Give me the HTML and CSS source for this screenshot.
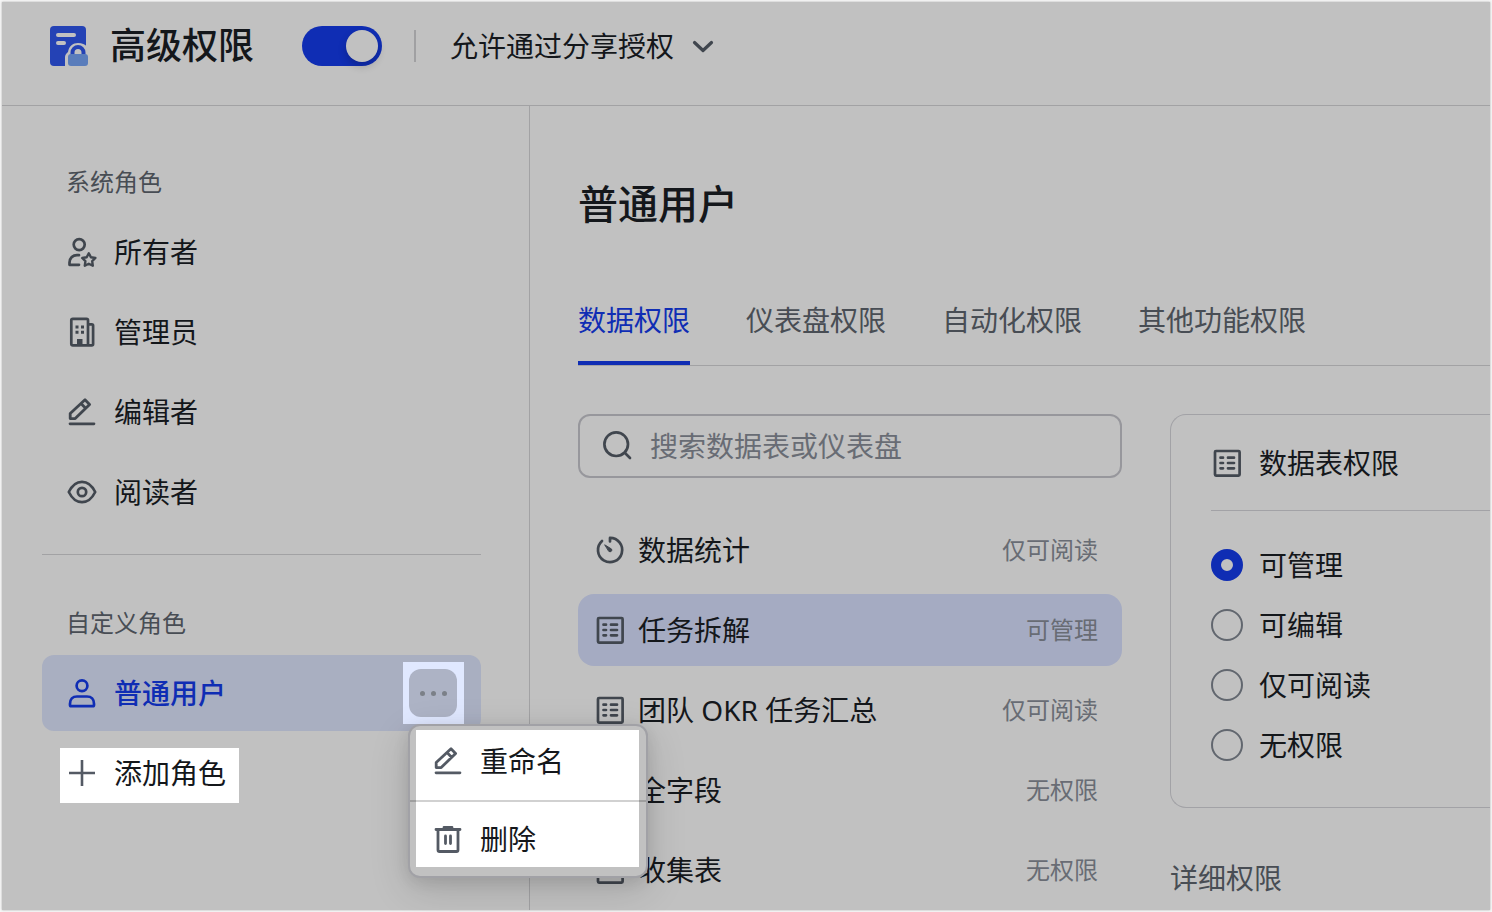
FILE: index.html
```html
<!DOCTYPE html>
<html lang="zh-CN">
<head>
    <meta charset="UTF-8">
    <meta name="viewport" content="width=device-width, initial-scale=1.0">
    <title>高级权限</title>
    <link rel="stylesheet" href="styles.css">
</head>
<body>

<!-- 公用图标 -->
<svg class="icon-defs" aria-hidden="true">
    <symbol id="icon-table" viewBox="0 0 32 32">
        <rect x="4" y="4" width="24.600" height="24.600" rx="1" fill="none" stroke="currentColor" stroke-width="2.700"/>
        <path d="M9.500 10.700h2.500M9.500 16h2.500M9.500 21.300h2.500M17 10.700h6M17 16h6M17 21.300h6" fill="none" stroke="currentColor" stroke-width="2.700" stroke-linecap="round"/>
    </symbol>
    <symbol id="icon-edit" viewBox="0 0 32 32">
        <path d="M4 27.800h24" fill="none" stroke="currentColor" stroke-width="2.700" stroke-linecap="round"/>
        <path d="M4.200 22.600v-5L19 3.800l4.600 4.600L9.200 22.600zM15 7.600l4.600 4.600" fill="none" stroke="currentColor" stroke-width="2.800" stroke-linejoin="round"/>
    </symbol>
</svg>

<div class="app">
    <!-- 顶部栏 -->
    <header class="header">
        <svg class="logo" viewBox="0 0 40 40" aria-hidden="true">
            <rect x="0" y="0" width="36" height="40" rx="4" fill="#2442b5"/>
            <path d="M8 9h16M8 17h6" fill="none" stroke="#c1c1c1" stroke-width="4" stroke-linecap="round"/>
            <path d="M15 40V31c0-2 1-3 3-5C19 20 23 17 28 17c4 0 7 1 9 4V29H40V40z" fill="#c1c1c1"/>
            <path d="M22.500 29v-2.500a5.500 5.500 0 0 1 11 0V29" fill="none" stroke="#2442b5" stroke-width="4"/>
            <rect x="18" y="28" width="20" height="12" rx="3" fill="#5a7dbb"/>
        </svg>
        <h1 class="header-title">高级权限</h1>
        <input type="checkbox" class="switch" role="switch" aria-label="高级权限" checked>
        <span class="header-line"></span>
        <div class="share">
            <select class="share-select" aria-label="分享授权">
                <option>允许通过分享授权</option>
            </select>
            <svg class="share-arrow" viewBox="0 0 24 24" aria-hidden="true">
                <path d="M3.500 8.500l8.500 8 8.500-8" fill="none" stroke="currentColor" stroke-width="3.200" stroke-linecap="round" stroke-linejoin="round"/>
            </svg>
        </div>
    </header>

    <div class="body">
        <!-- 左侧角色列表 -->
        <aside class="sidebar">
            <h2 class="group-title">系统角色</h2>
            <ul class="role-list">
                <li class="role">
                    <button class="role-button">
                        <svg class="icon" viewBox="0 0 32 32" fill="none" stroke="currentColor" stroke-width="2.700" stroke-linejoin="round" aria-hidden="true">
                            <circle cx="13.200" cy="8.600" r="5.500"/>
                            <path d="M13 19.200h-2c-4.500 0-7.500 3-7.500 7.300v2.300H13" stroke-linecap="round"/>
                            <path d="M22.800 17.200l2.100 4 4.500.8-3.200 3.200.6 4.500-4-2-4 2 .6-4.500-3.200-3.200 4.500-.8z" stroke-width="2.400"/>
                        </svg>
                        <span>所有者</span>
                    </button>
                </li>
                <li class="role">
                    <button class="role-button">
                        <svg class="icon" viewBox="0 0 32 32" aria-hidden="true">
                            <path d="M22 29.400H6.800A1.500 1.500 0 0 1 5.300 28V4.300a1.500 1.500 0 0 1 1.500-1.500H20.500A1.500 1.500 0 0 1 22 4.300v25.100h3.800a1.300 1.300 0 0 0 1.300-1.300V9.600a1.300 1.300 0 0 0-1.300-1.300H22" fill="none" stroke="currentColor" stroke-width="2.700"/>
                            <path d="M9.500 9.500h3v3h-3zM15 9.500h3v3h-3zM9.500 14.800h3v3h-3zM15 14.800h3v3h-3zM11 23h5.500v6H11z" fill="currentColor"/>
                        </svg>
                        <span>管理员</span>
                    </button>
                </li>
                <li class="role">
                    <button class="role-button">
                        <svg class="icon" aria-hidden="true"><use href="#icon-edit"/></svg>
                        <span>编辑者</span>
                    </button>
                </li>
                <li class="role">
                    <button class="role-button">
                        <svg class="icon" viewBox="0 0 32 32" fill="none" stroke="currentColor" stroke-width="2.700" stroke-linejoin="round" aria-hidden="true">
                            <path d="M2.800 16C6 9.500 10.500 5.800 16 5.800S26 9.500 29.200 16C26 22.500 21.500 26.200 16 26.200S6 22.500 2.800 16z"/>
                            <circle cx="16" cy="16" r="4.200"/>
                        </svg>
                        <span>阅读者</span>
                    </button>
                </li>
            </ul>

            <hr class="divider">

            <h2 class="group-title">自定义角色</h2>
            <ul class="role-list">
                <li class="role active">
                    <button class="role-button">
                        <svg class="icon" viewBox="0 0 32 32" fill="none" stroke="currentColor" stroke-width="2.700" stroke-linejoin="round" aria-hidden="true">
                            <circle cx="16" cy="8.700" r="5.400"/>
                            <path d="M5.200 29.200A1.200 1.200 0 0 1 4 28v-1.200c0-4.500 2.600-7.300 7-7.300h10c4.400 0 7 2.800 7 7.300V28a1.200 1.200 0 0 1-1.200 1.200z"/>
                        </svg>
                        <span>普通用户</span>
                    </button>
                    <div class="more">
                        <button class="more-button" aria-label="更多操作">
                            <i class="dot"></i><i class="dot"></i><i class="dot"></i>
                        </button>
                        <!-- 更多操作菜单 -->
                        <div class="menu">
                            <ul class="menu-list">
                                <li>
                                    <button class="menu-item">
                                        <svg class="icon" aria-hidden="true"><use href="#icon-edit"/></svg>
                                        <span>重命名</span>
                                    </button>
                                </li>
                                <li class="menu-line"></li>
                                <li>
                                    <button class="menu-item last">
                                        <svg class="icon" viewBox="0 0 32 32" fill="none" stroke="currentColor" stroke-width="2.800" stroke-linejoin="round" aria-hidden="true">
                                            <path d="M6 6.500V27a1.500 1.500 0 0 0 1.500 1.500h17A1.500 1.500 0 0 0 26 27V6.500"/>
                                            <path d="M4 6.500h24M12 4.500h8M13.500 13v7.500M18.500 13v7.500" stroke-linecap="round"/>
                                        </svg>
                                        <span>删除</span>
                                    </button>
                                </li>
                            </ul>
                        </div>
                    </div>
                </li>
                <li class="role">
                    <button class="add-button">
                        <svg class="icon" viewBox="0 0 32 32" aria-hidden="true">
                            <path d="M16 3v26M3 16h26" fill="none" stroke="currentColor" stroke-width="2.600"/>
                        </svg>
                        <span>添加角色</span>
                    </button>
                </li>
            </ul>
        </aside>

        <!-- 右侧权限设置 -->
        <main class="main">
            <h2 class="main-title">普通用户</h2>
            <div class="tabs" role="tablist">
                <button class="tab active" role="tab" aria-selected="true">数据权限</button>
                <button class="tab" role="tab">仪表盘权限</button>
                <button class="tab" role="tab">自动化权限</button>
                <button class="tab" role="tab">其他功能权限</button>
            </div>

            <div class="content">
                <section class="tables">
                    <label class="search">
                        <svg class="icon" viewBox="0 0 32 32" fill="none" stroke="currentColor" stroke-width="2.700" stroke-linecap="round" aria-hidden="true">
                            <circle cx="14.200" cy="14.200" r="11.800"/>
                            <path d="M23 23l5 5"/>
                        </svg>
                        <input type="text" class="search-input" placeholder="搜索数据表或仪表盘" aria-label="搜索数据表或仪表盘">
                    </label>
                    <ul class="table-list">
                        <li>
                            <button class="table-item">
                                <svg class="icon" viewBox="0 0 32 32" fill="none" stroke="currentColor" stroke-width="2.700" stroke-linecap="round" stroke-linejoin="round" aria-hidden="true">
                                    <path d="M8 7A12.100 12.100 0 1 0 16 3.900V7.500"/>
                                    <path d="M11 11l6.500 4a1.800 1.800 0 0 1-2.500 2.500z" fill="currentColor" stroke-width="1"/>
                                </svg>
                                <span>数据统计</span>
                                <span class="state">仅可阅读</span>
                            </button>
                        </li>
                        <li>
                            <button class="table-item active">
                                <svg class="icon" aria-hidden="true"><use href="#icon-table"/></svg>
                                <span>任务拆解</span>
                                <span class="state">可管理</span>
                            </button>
                        </li>
                        <li>
                            <button class="table-item">
                                <svg class="icon" aria-hidden="true"><use href="#icon-table"/></svg>
                                <span>团队 OKR 任务汇总</span>
                                <span class="state">仅可阅读</span>
                            </button>
                        </li>
                        <li>
                            <button class="table-item">
                                <svg class="icon" aria-hidden="true"><use href="#icon-table"/></svg>
                                <span>全字段</span>
                                <span class="state">无权限</span>
                            </button>
                        </li>
                        <li>
                            <button class="table-item">
                                <svg class="icon" aria-hidden="true"><use href="#icon-table"/></svg>
                                <span>收集表</span>
                                <span class="state">无权限</span>
                            </button>
                        </li>
                    </ul>
                </section>

                <section class="detail">
                    <div class="panel">
                        <h3 class="panel-title">
                            <svg class="icon" aria-hidden="true"><use href="#icon-table"/></svg>
                            <span>数据表权限</span>
                        </h3>
                        <div class="options">
                            <label class="option"><input type="radio" name="permission" class="radio" checked>可管理</label>
                            <label class="option"><input type="radio" name="permission" class="radio">可编辑</label>
                            <label class="option"><input type="radio" name="permission" class="radio">仅可阅读</label>
                            <label class="option"><input type="radio" name="permission" class="radio">无权限</label>
                        </div>
                    </div>
                    <h3 class="detail-title">详细权限</h3>
                </section>
            </div>
        </main>
    </div>
</div>

</body>
</html>
```
FILE: styles.css
```css
* {
    box-sizing: border-box;
}

body {
    margin: 0;
    padding: 2px;
    background-color: #f6f6f6;
    color: #14171b;
    font-family: "Noto Sans", "Noto Sans CJK SC", sans-serif;
    font-size: 28px;
    line-height: 44px;
    overflow: hidden;
}

h1, h2, h3, ul {
    margin: 0;
    padding: 0;
    font-size: 28px;
    font-weight: 400;
    list-style: none;
}

button, input, select {
    margin: 0;
    padding: 0;
    border: none;
    background: none;
    color: inherit;
    font: inherit;
    cursor: pointer;
}

.icon-defs {
    position: absolute;
    width: 0;
    height: 0;
}

.icon {
    flex: none;
    width: 32px;
    height: 32px;
    color: #40464e;
}

.app {
    display: flex;
    flex-direction: column;
    min-height: calc(100vh - 4px);
    background-color: #c1c1c1;
    box-shadow: 0 0 2px rgba(0, 0, 0, 0.3);
}

/* 顶部栏 */
.header {
    display: flex;
    align-items: center;
    height: 104px;
    padding: 0 48px 15px;
    border-bottom: 1px solid #a2a2a4;
}

.logo {
    width: 40px;
    height: 40px;
}

.header-title {
    margin: 0 48px 0 20px;
    font-size: 36px;
    font-weight: 500;
}

.switch {
    appearance: none;
    width: 80px;
    height: 40px;
    padding: 4px;
    border-radius: 20px;
    background-color: #0f2db4;
}

.switch::before {
    content: "";
    display: block;
    width: 32px;
    height: 32px;
    margin-left: auto;
    border-radius: 50%;
    background-color: #c1c1c1;
    box-shadow: 0 4px 8px rgba(0, 0, 0, 0.2);
}

.header-line {
    width: 2px;
    height: 32px;
    margin: 0 34px 0 32px;
    background-color: #a0a0a2;
}

.share {
    position: relative;
}

.share-select {
    appearance: none;
    display: block;
    height: 44px;
    padding-right: 40px;
}

.share-arrow {
    position: absolute;
    top: 10px;
    right: 0;
    width: 24px;
    height: 24px;
    color: #40464e;
    pointer-events: none;
}

.body {
    display: flex;
    flex: 1;
}

/* 左侧角色列表 */
.sidebar {
    flex: none;
    width: 528px;
    padding: 58px 48px 0 40px;
    border-right: 1px solid #a2a2a4;
}

.group-title {
    margin-bottom: 14px;
    padding-left: 24px;
    color: #484d54;
    font-size: 24px;
    line-height: 36px;
}

.role-list {
    display: flex;
    flex-direction: column;
    gap: 4px;
}

.role {
    display: flex;
    align-items: center;
    height: 76px;
    border-radius: 12px;
}

.role-button {
    display: flex;
    flex: 1;
    align-items: center;
    gap: 16px;
    padding-left: 24px;
}

.role.active {
    background-color: #a9afc1;
}

.role.active .role-button,
.role.active .role-button .icon {
    color: #0f2db4;
    font-weight: 500;
}

.divider {
    height: 1px;
    margin: 24px 0 50px;
    border: none;
    background-color: #a2a2a4;
}

.add-button {
    display: flex;
    align-items: center;
    gap: 16px;
    height: 55px;
    margin: 5px 0 0 18px;
    padding: 0 13px 5px 6px;
    background-color: #ffffff;
}

.more {
    position: relative;
    display: flex;
    align-items: center;
    height: 62px;
    margin-right: 17px;
    padding: 0 7px 0 6px;
    background-color: #e0e8ff;
}

.more-button {
    display: flex;
    align-items: center;
    justify-content: center;
    gap: 6px;
    width: 48px;
    height: 48px;
    border-radius: 12px;
    background-color: #adb3c5;
}

.dot {
    width: 5px;
    height: 5px;
    border-radius: 50%;
    background-color: #7b8088;
}

/* 更多操作菜单 */
.menu {
    position: absolute;
    z-index: 10;
    top: 62px;
    left: 5px;
    width: 240px;
    padding: 4px 7px 9px 6px;
    border: 2px solid #a1a1a6;
    border-radius: 12px;
    background-color: #c1c1c1;
    box-shadow: 0 12px 40px rgba(0, 0, 0, 0.14), 0 4px 16px rgba(0, 0, 0, 0.1);
}

.menu-list {
    background-color: #ffffff;
}

.menu-item {
    display: flex;
    align-items: center;
    gap: 16px;
    width: 100%;
    padding: 9px 16px 17px;
}

.menu-item.last {
    padding: 15px 16px 6px;
}

.menu .icon,
.add-button .icon {
    color: #545a64;
}

.menu-line {
    height: 2px;
    margin: 0 -7px 0 -6px;
    background-color: rgba(0, 0, 0, 0.18);
}

/* 右侧权限设置 */
.main {
    flex: 1;
    min-width: 0;
    padding: 68px 0 0 48px;
}

.main-title {
    font-size: 40px;
    font-weight: 500;
    line-height: 60px;
}

.tabs {
    display: flex;
    gap: 56px;
    height: 132px;
    align-items: flex-end;
    border-bottom: 1px solid #a2a2a4;
}

.tab {
    height: 67px;
    padding-bottom: 19px;
    border-bottom: 4px solid transparent;
    color: #484d54;
    white-space: nowrap;
}

.tab.active {
    border-bottom-color: #0f2db4;
    color: #0f2db4;
}

.content {
    display: grid;
    grid-template-columns: 544px 1fr;
    gap: 48px;
    padding-top: 48px;
}

.search {
    display: flex;
    align-items: center;
    gap: 16px;
    height: 64px;
    padding: 0 22px;
    border: 2px solid #97979c;
    border-radius: 12px;
}

.search-input {
    flex: 1;
    min-width: 0;
    height: 44px;
    outline: none;
    cursor: text;
}

.search-input::placeholder {
    color: #686c74;
    opacity: 1;
}

.table-list {
    display: flex;
    flex-direction: column;
    gap: 8px;
    margin-top: 36px;
}

.table-item {
    display: flex;
    align-items: center;
    gap: 12px;
    width: 100%;
    height: 72px;
    padding: 0 24px 0 16px;
    border-radius: 16px;
}

.table-item.active {
    background-color: #a5abc2;
}

.state {
    margin-left: auto;
    color: #686c74;
    font-size: 24px;
}

.panel {
    padding: 0 0 32px 40px;
    border: 1px solid #a2a2a6;
    border-right: none;
    border-radius: 16px 0 0 16px;
}

.panel-title {
    display: flex;
    align-items: center;
    gap: 16px;
    height: 96px;
    border-bottom: 1px solid #a2a2a6;
}

.options {
    padding-top: 24px;
}

.option {
    display: flex;
    align-items: center;
    gap: 16px;
    height: 60px;
    cursor: pointer;
}

.radio {
    appearance: none;
    width: 32px;
    height: 32px;
    border: 2px solid #62676f;
    border-radius: 50%;
}

.radio:checked {
    border: 10px solid #0f2db4;
}

.detail-title {
    margin-top: 48px;
    color: #484d54;
}
```
